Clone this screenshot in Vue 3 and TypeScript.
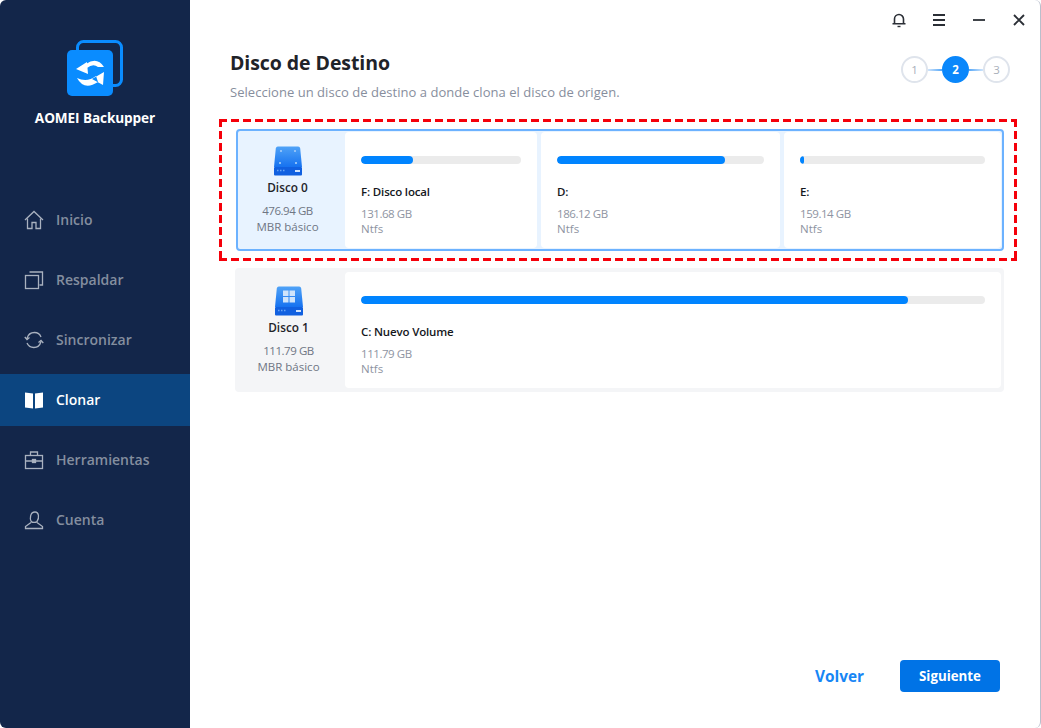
<script setup lang="ts">
interface Part { name: string; size: string; used: number; cls: string }
interface Nav { label: string; icon: string; active?: boolean }
const nav: Nav[] = [
  { label: 'Inicio', icon: 'home' },
  { label: 'Respaldar', icon: 'backup' },
  { label: 'Sincronizar', icon: 'sync' },
  { label: 'Clonar', icon: 'clone', active: true },
  { label: 'Herramientas', icon: 'tools' },
  { label: 'Cuenta', icon: 'user' },
]
const parts0: Part[] = [
  { name: 'F: Disco local', size: '131.68 GB', used: 32.5, cls: 'p1' },
  { name: 'D:', size: '186.12 GB', used: 81, cls: 'p2' },
  { name: 'E:', size: '159.14 GB', used: 2.2, cls: 'p3' },
]
const parts1: Part[] = [{ name: 'C: Nuevo Volume', size: '111.79 GB', used: 87.7, cls: 'pfull' }]
const disks = [
  { name: 'Disco 0', size: '476.94 GB', win: false, parts: parts0 },
  { name: 'Disco 1', size: '111.79 GB', win: true, parts: parts1 },
]
</script>

<template>
  <div class="window">
    <aside class="sidebar">
      <div class="logo">
        <svg width="58" height="58" viewBox="0 0 58 58">
          <rect x="12.500" y="2.500" width="44" height="44" rx="6" fill="none" stroke="#0a8cff" stroke-width="3" />
          <rect x="2" y="11" width="46" height="46" rx="5" fill="#0a8cff" />
          <path d="M11 30 22 23 23 35Z M21 25Q32 17 39 28L33 28Q28 24 22 29Z" fill="#fff" />
          <path d="M39 33 38 46 27 40Z M12 39Q19 52 33 43L31 37Q22 44 12 39Z" fill="#fff" />
        </svg>
        <div class="brand">AOMEI Backupper</div>
      </div>
      <nav class="nav">
        <div v-for="n in nav" :key="n.label" class="nav-item" :class="{ active: n.active }">
          <svg class="nav-icon" width="20" height="20" viewBox="0 0 20 20" fill="none" stroke="currentColor" stroke-width="1.300">
            <template v-if="n.icon === 'home'">
              <path d="M1 10 10 1.500 19 10" />
              <path d="M3.500 8.500V18.500H8V12.500H12V18.500H16.500V8.500" />
            </template>
            <template v-else-if="n.icon === 'backup'">
              <rect x="1.500" y="5.500" width="13" height="13" />
              <path d="M5.500 2H18.500V15H15.500" />
            </template>
            <template v-else-if="n.icon === 'sync'">
              <path d="M3 8.500C4 4.500 7 2.500 10.500 2.500 13.500 2.500 16 4.300 17 7" />
              <path d="M17 11.500C16 15.300 13.300 17.500 9.800 17.500 6.800 17.500 4.200 15.800 3 13" />
              <path d="M.8 7 3 9.500 5.500 7.500M19.300 13 17 10.500 14.500 12.500" />
            </template>
            <template v-else-if="n.icon === 'clone'">
              <path d="M1 2.500 9 3.500V18.500L1 17.500ZM19 2.500 11 3.500V18.500L19 17.500Z" fill="currentColor" stroke="none" />
            </template>
            <template v-else-if="n.icon === 'tools'">
              <rect x="1.500" y="5.500" width="17" height="13" />
              <path d="M6.500 5.500V2H13.500V5.500M1.500 11H8M12 11H18.500" />
              <rect x="8.500" y="9.500" width="3" height="3" fill="currentColor" />
            </template>
            <template v-else>
              <path d="M7.200 11.500C5.600 9 6 2 11 2c4 0 4.500 6 2 9.500-.9 1.200-4.800 1.300-5.800 0Z" />
              <path d="M7 12.500 1.500 16.500V18.500H18.500V16.500L13 12.500" />
            </template>
          </svg>
          <span class="nav-label">{{ n.label }}</span>
        </div>
      </nav>
    </aside>

    <main class="main">
      <div class="topbar">
        <svg class="bell" width="16" height="16" viewBox="0 0 16 16" fill="none" stroke="#2b2f36" stroke-width="1.600">
          <path d="M3.500 11.500V7a4.500 4.500 0 0 1 9 0v4.500M1.500 11.700H14.500" />
          <path d="M6.500 14.500H9.500" stroke-width="1.400" />
        </svg>
        <svg width="14" height="14" viewBox="0 0 14 14" stroke="#2b2f36" stroke-width="1.800"><path d="M1 2H13M1 7H13M1 12H13" /></svg>
        <svg width="14" height="14" viewBox="0 0 14 14" stroke="#2b2f36" stroke-width="1.800"><path d="M1 7H13" /></svg>
        <svg width="14" height="14" viewBox="0 0 14 14" stroke="#2b2f36" stroke-width="1.900"><path d="M2 2 12 12M12 2 2 12" /></svg>
      </div>

      <header class="head">
        <div>
          <h1>Disco de Destino</h1>
          <p>Seleccione un disco de destino a donde clona el disco de origen.</p>
        </div>
        <div class="steps">
          <span class="step">1</span>
          <i class="link" />
          <span class="step on">2</span>
          <i class="link rev" />
          <span class="step">3</span>
        </div>
      </header>

      <section class="disks">
        <div v-for="(d, i) in disks" :key="d.name" :class="i === 0 ? 'marked' : 'plain'">
          <div class="disk" :class="{ selected: i === 0 }">
            <div class="info">
              <svg width="30" height="30" viewBox="0 0 30 30">
                <defs>
                  <linearGradient id="dg" x1="0" y1="0" x2="0" y2="1">
                    <stop offset="0" stop-color="#4fa2f7" />
                    <stop offset="1" stop-color="#1672f0" />
                  </linearGradient>
                </defs>
                <path d="M2.800 2.500C3 1.200 3.800.5 4.800.5h20.400c1 0 1.800.7 2 2L29 21H1Z" fill="url(#dg)" />
                <rect x="1" y="21" width="28" height="8.500" rx="1" fill="#1160e0" />
                <rect x="22" y="24" width="5" height="2" fill="#cfe3ff" />
                <path d="M4 24.500h1.500M7 24.500h1.500M10 24.500h1.500" stroke="#6aa5f5" stroke-width="1.500" />
                <template v-if="d.win">
                  <path d="M9 4.500h5.500v5.500H9zM15.500 4.500h5.500v5.500h-5.500zM9 11h5.500v5.500H9zM15.500 11h5.500v5.500h-5.500z" fill="#cfe4fb" />
                </template>
                <template v-else>
                  <path d="M7 4h2v2H7zM21 4h2v2h-2zM6 16h2v2H6zM22 16h2v2h-2z" fill="#8ec0f8" />
                </template>
              </svg>
              <div class="disk-name">{{ d.name }}</div>
              <div class="disk-meta"><span class="num">{{ d.size }}</span><br />MBR básico</div>
            </div>
            <div class="parts">
              <div v-for="p in d.parts" :key="p.name" class="part" :class="p.cls">
                <div class="bar"><div class="fill" :style="{ width: p.used + '%' }" /></div>
                <div class="pname">{{ p.name }}</div>
                <div class="pmeta"><span class="num">{{ p.size }}</span><br />Ntfs</div>
              </div>
            </div>
          </div>
        </div>
      </section>

      <footer class="foot">
        <button class="back">Volver</button>
        <button class="next">Siguiente</button>
      </footer>
    </main>
  </div>
</template>

<style>
html, body { margin: 0; background: #fff; }
</style>

<style scoped>
.window {
  width: 1041px;
  height: 728px;
  display: flex;
  box-sizing: border-box;
  overflow: hidden;
  font-family: "Open Sans", "Noto Sans", sans-serif;
  background: #fff;
  border-right: 1px solid #b9bfcc;
  border-radius: 6px;
}
.sidebar {
  width: 190px;
  flex: none;
  background: #13264a;
  color: #8a94a6;
}
.logo {
  display: flex;
  flex-direction: column;
  align-items: center;
  padding-top: 39px;
}
.logo svg { margin-left: -2px; }
.brand {
  margin-top: 11px;
  color: #fff;
  font-size: 13.600px;
  font-weight: 700;
  line-height: 20px;
  letter-spacing: -.1px;
}
.nav {
  margin-top: 66px;
  display: flex;
  flex-direction: column;
  gap: 8px;
}
.nav-item {
  height: 52px;
  display: flex;
  align-items: center;
  gap: 12px;
  padding-left: 24px;
  font-size: 14px;
  font-weight: 600;
  color: #848e9f;
}
.nav-label { margin-bottom: 2px; }
.nav-item .nav-icon { color: #a9b1bf; }
.nav-item.active { background: #0c4580; color: #fff; }
.nav-item.active .nav-icon { color: #fff; }

.main {
  flex: 1;
  min-width: 0;
  display: flex;
  flex-direction: column;
  padding: 0 36px 36px 40px;
}
.topbar {
  height: 40px;
  display: flex;
  align-items: center;
  justify-content: flex-end;
  gap: 26px;
  margin-right: -22px;
}
.bell { margin-right: -1px; }
.head {
  display: flex;
  justify-content: space-between;
  align-items: flex-start;
  margin-right: -6px;
  height: 79px;
}
h1 {
  margin: 8px 0 0;
  font-size: 19.500px;
  line-height: 30px;
  font-weight: 700;
  color: #1f2329;
  letter-spacing: -.07px;
}
.head p {
  margin: 5px 0 0;
  font-size: 13px;
  line-height: 18px;
  color: #878e9d;
  letter-spacing: .04px;
}
.steps {
  display: flex;
  align-items: center;
  margin-top: 16px;
}
.step {
  width: 27px;
  height: 27px;
  box-sizing: border-box;
  border: 2px solid #dfe4ec;
  border-radius: 50%;
  display: flex;
  align-items: center;
  justify-content: center;
  font-size: 11.500px;
  color: #a9afba;
  background: #fff;
}
.step.on {
  background: #0a87fb;
  border-color: #0a87fb;
  color: #fff;
  font-weight: 700;
}
.link {
  width: 14px;
  height: 2px;
  background: linear-gradient(90deg, #cfe4fb, #57a8f8);
}
.link.rev { background: linear-gradient(90deg, #57a8f8, #cfe4fb); }

.disks {
  display: flex;
  flex-direction: column;
  margin-left: -11px;
  margin-right: -13px;
  gap: 7px;
}
.marked {
  padding: 10px 13px 10px 17px;
  background:
    linear-gradient(90deg, #f5000a 8px, transparent 8px) 0 0 / 12px 3px repeat-x,
    linear-gradient(90deg, #f5000a 8px, transparent 8px) 0 100% / 12px 3px repeat-x,
    linear-gradient(180deg, #f5000a 8px, transparent 8px) 0 0 / 3px 12px repeat-y,
    linear-gradient(180deg, #f5000a 8px, transparent 8px) 100% 0 / 3px 12px repeat-y;
}
.plain { padding: 0 13px 0 16px; }
.disk {
  display: flex;
  box-sizing: border-box;
  height: 124px;
  border-radius: 4px;
  background: #f4f5f7;
  padding: 4px 3px 4px 0;
}
.disk.selected {
  height: 122px;
  background: #e8f3ff;
  border: 2px solid #6cb2ff;
  padding: 1px 1px 0 0;
}
.info {
  width: 107px;
  flex: none;
  margin-left: 3px;
  display: flex;
  flex-direction: column;
  align-items: center;
  text-align: center;
  padding: 14px 6px 0 0;
  box-sizing: border-box;
}
.disk.selected .info { margin-left: 0; padding-right: 8px; }
.disk-name {
  margin-top: 3px;
  font-size: 11.800px;
  line-height: 16px;
  font-weight: 600;
  color: #1f2329;
}
.disk-meta {
  margin-top: 8px;
  font-size: 11.500px;
  line-height: 16px;
  color: #6f7684;
}
.num { letter-spacing: -.45px; }
.parts {
  flex: 1;
  display: flex;
  gap: 4px;
  min-width: 0;
}
.part {
  background: #fff;
  border-radius: 4px;
  box-sizing: border-box;
  padding: 24px 16px 0;
  min-width: 0;
}
.p1 { width: 192px; flex: none; }
.p2 { width: 239px; flex: none; }
.p3 { flex: 1; }
.pfull { flex: 1; }
.disk.selected .parts { height: 116px; }
.bar {
  height: 8px;
  background: #ebebeb;
  border-radius: 4px;
  overflow: hidden;
}
.fill {
  height: 100%;
  background: #0084ff;
  border-radius: 4px;
}
.pname {
  margin-top: 20px;
  font-size: 11.500px;
  line-height: 16px;
  font-weight: 600;
  color: #15181d;
  letter-spacing: -.15px;
}
.pmeta {
  margin-top: 6px;
  font-size: 11.500px;
  line-height: 15px;
  color: #8e94a2;
}
.foot {
  margin-top: auto;
  display: flex;
  justify-content: flex-end;
  align-items: center;
  gap: 36px;
  margin-right: 4px;
}
button {
  font-family: inherit;
  border: none;
  cursor: pointer;
  padding: 0;
  font-weight: 700;
}
.back {
  background: none;
  color: #1786f5;
  font-size: 15.400px;
}
.next {
  width: 100px;
  height: 32px;
  border-radius: 4px;
  background: #0073e6;
  color: #fff;
  font-size: 13.300px;
}
</style>
